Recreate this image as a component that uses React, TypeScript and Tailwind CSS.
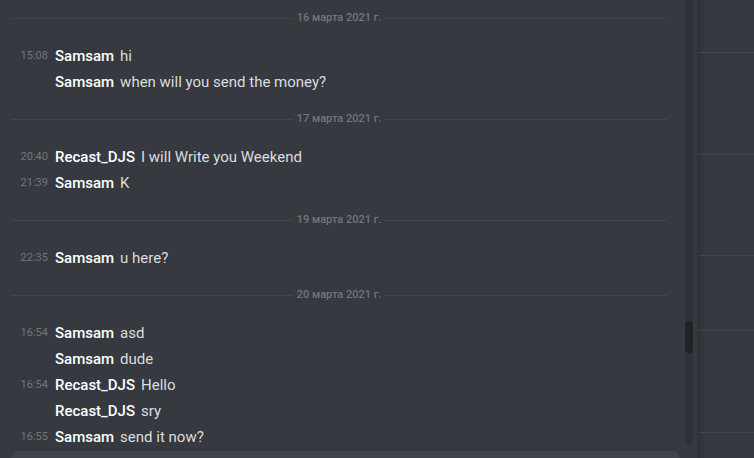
const days = [
  {
    date: '16 марта 2021 г.',
    messages: [
      { time: '15:08', name: 'Samsam', text: 'hi' },
      { time: '', name: 'Samsam', text: 'when will you send the money?' },
    ],
  },
  {
    date: '17 марта 2021 г.',
    messages: [
      { time: '20:40', name: 'Recast_DJS', text: 'I will Write you Weekend' },
      { time: '21:39', name: 'Samsam', text: 'K' },
    ],
  },
  {
    date: '19 марта 2021 г.',
    messages: [{ time: '22:35', name: 'Samsam', text: 'u here?' }],
  },
  {
    date: '20 марта 2021 г.',
    messages: [
      { time: '16:54', name: 'Samsam', text: 'asd' },
      { time: '', name: 'Samsam', text: 'dude' },
      { time: '16:54', name: 'Recast_DJS', text: 'Hello' },
      { time: '', name: 'Recast_DJS', text: 'sry' },
      { time: '16:55', name: 'Samsam', text: 'send it now?' },
    ],
  },
];

const App = () => {
  return (
    <div className="w-[754px] h-[458px] overflow-hidden flex bg-[#36393f] font-['Roboto',sans-serif]">
      {/* chat column */}
      <div className="relative w-[685px] h-full overflow-hidden">
        <div className="-mt-[6px] flex flex-col">
          {days.map((day) => (
            <div key={day.date} className="flex flex-col">
              <div className="h-[48px] mb-[1px] ml-[11px] mr-[18px] flex items-center">
                <div className="flex-1 h-px bg-[#42454a]" />
                <span className="px-1 text-[11px] font-medium text-[#72767d]">{day.date}</span>
                <div className="flex-1 h-px bg-[#42454a]" />
              </div>
              {day.messages.map((m, i) => (
                <div key={i} className="h-[26px] pt-px flex items-center">
                  <span className="w-[48px] text-right text-[11px] text-[#72767d]">{m.time}</span>
                  <span className="ml-[7px] text-[15px] font-medium text-white">{m.name}</span>
                  <span className="ml-[6px] text-[15px] text-[#dcddde]">{m.text}</span>
                </div>
              ))}
            </div>
          ))}
        </div>
        <div className="absolute left-[11px] right-[5px] top-[451px] h-[44px] rounded-lg bg-[#40444b]" />
      </div>

      {/* scrollbar */}
      <div className="w-[12px] h-full">
        <div className="w-[8px] h-[446px] rounded-b bg-[#2e3338] pt-[321px]">
          <div className="h-[32px] rounded bg-[#202225]" />
        </div>
      </div>

      {/* side panel */}
      <div className="flex-1 h-full border-l border-[#2f3136] bg-[#36393f] shadow-[inset_8px_0_6px_-4px_rgba(0,0,0,0.12)] flex flex-col">
        <div className="h-[53px] border-b border-[#42454a]" />
        <div className="h-[102px] border-b border-[#42454a]" />
        <div className="h-[101px] border-b border-[#42454a]" />
        <div className="h-[75px] border-b border-[#42454a]" />
        <div className="h-[102px] border-b border-[#42454a]" />
      </div>
    </div>
  );
};

export default App;
